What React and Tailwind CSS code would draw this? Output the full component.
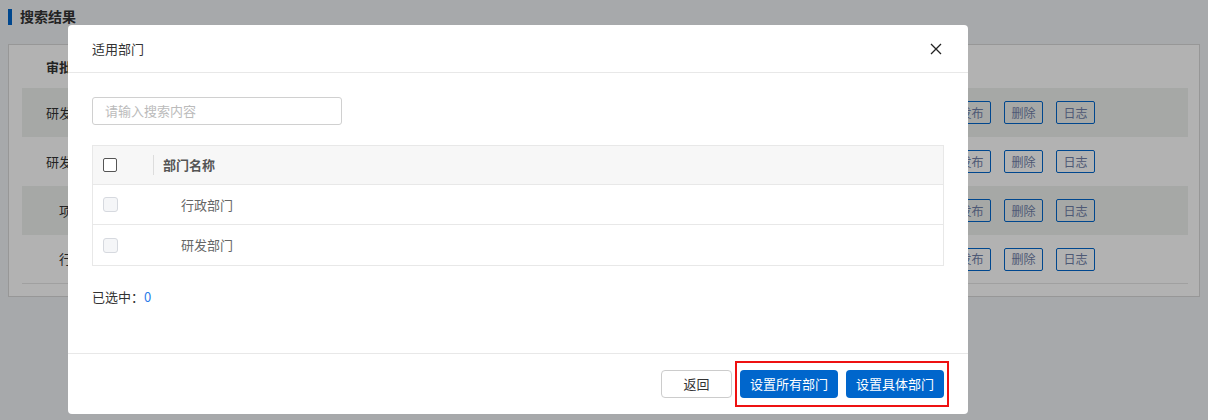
import React from 'react';

const rows = [
  { name: '研发部门流程', striped: true },
  { name: '研发部门审批', striped: false },
  { name: '项目流程', striped: true },
  { name: '行政流程', striped: false },
];

const depts = ['行政部门', '研发部门'];

const font = { fontFamily: '"Noto Sans CJK SC", "Noto Sans", sans-serif' };

const App = () => {
  return (
    <div className="relative w-[1208px] h-[420px] overflow-hidden bg-[#f0f2f5]" style={font}>
      {/* page underneath */}
      <div className="flex items-center h-[33px] pl-2">
        <div className="w-[4px] h-[16px] bg-[#0066cc]" />
        <span className="ml-[8px] text-[14px] font-bold text-[#333]">搜索结果</span>
      </div>
      <div className="mx-2 mt-[11px] h-[253px] border border-[#d9d9d9] bg-white pl-[13px] pr-[11px]">
        <div className="flex items-center h-[43px]">
          <div className="pl-[24px] whitespace-nowrap text-[13px] font-bold text-[#333]">审批流程名称</div>
        </div>
        {rows.map((r) => (
          <div
            key={r.name + r.striped}
            className={`flex items-center h-[49px] ${r.striped ? 'bg-[#eef1ee]' : 'bg-white'} ${r.name === '行政流程' ? 'border-b border-[#e6e6e6]' : ''}`}
          >
            <div className="w-[126px] whitespace-nowrap text-center text-[13px] text-[#333]">{r.name}</div>
            <div className="flex-1" />
            <div className="flex gap-[13px] mr-[93px]">
              {['发布', '删除', '日志'].map((b) => (
                <button
                  key={b}
                  className="w-[39px] h-[23px] border border-[#0066cc] rounded-[2px] text-[12px] text-[#7080a8] leading-none"
                >
                  {b}
                </button>
              ))}
            </div>
          </div>
        ))}
      </div>

      {/* mask */}
      <div className="absolute inset-0 bg-black/30" />

      {/* modal */}
      <div className="absolute left-[68px] top-[25px] w-[900px] h-[389px] bg-white rounded-[4px] flex flex-col">
        <div className="flex items-center justify-between h-[48px] border-b border-[#e8e8e8] pl-[24px] pr-[26px]">
          <span className="text-[13px] text-[#333]">适用部门</span>
          <svg width="12" height="12" viewBox="0 0 12 12" className="text-[#222]">
            <path d="M1 1L11 11M11 1L1 11" stroke="currentColor" strokeWidth="1.3" />
          </svg>
        </div>
        <div className="flex-1 px-[24px] pt-[24px]">
          <div className="w-[250px] h-[28px] border border-[#d0d0d0] rounded-[3px] flex items-center pl-[12px] text-[13px] text-[#bbb]">
            请输入搜索内容
          </div>
          <div className="mt-[20px] border border-[#e8e8e8]">
            <div className="flex items-center h-[39px] bg-[#f7f7f7] border-b border-[#e8e8e8]">
              <div className="w-[60px] flex items-center pl-[10px] h-full">
                <div className="w-[14px] h-[14px] border border-[#555] rounded-[2px] bg-white" />
              </div>
              <div className="w-px h-[20px] bg-[#ddd]" />
              <span className="ml-[9px] text-[13px] font-bold text-[#555]">部门名称</span>
            </div>
            {depts.map((d, i) => (
              <div
                key={d}
                className={`flex items-center h-[40px] ${i === 0 ? 'border-b border-[#e8e8e8]' : ''}`}
              >
                <div className="w-[60px] pl-[10px]">
                  <div className="w-[15px] h-[15px] border border-[#d6d9df] rounded-[3px] bg-[#f5f6f8]" />
                </div>
                <span className="ml-[28px] text-[13px] text-[#666]">{d}</span>
              </div>
            ))}
          </div>
          <div className="mt-[21px] text-[13px] text-[#333]">
            已选中：<span className="text-[#2b7de9]">0</span>
          </div>
        </div>
        <div className="h-[61px] border-t border-[#e8e8e8] flex items-center justify-end pr-[24px] gap-[8px]">
          <button className="w-[71px] h-[28px] border border-[#ccc] rounded-[4px] text-[13px] text-[#333] bg-white">
            返回
          </button>
          <div className="relative flex gap-[8px]">
            <button className="w-[98px] h-[28px] rounded-[4px] bg-[#0066cc] text-white text-[13px]">
              设置所有部门
            </button>
            <button className="w-[98px] h-[28px] rounded-[4px] bg-[#0066cc] text-white text-[13px]">
              设置具体部门
            </button>
            <div className="absolute -left-[5px] -top-[9px] -right-[5px] -bottom-[9px] border-2 border-[#ee1111]" />
          </div>
        </div>
      </div>
    </div>
  );
};

export default App;
